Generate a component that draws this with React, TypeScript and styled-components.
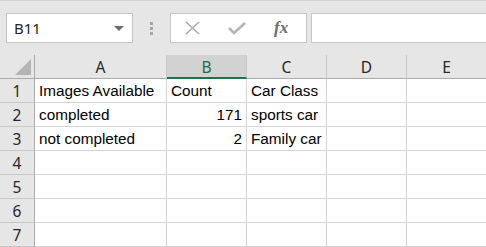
import { Fragment } from "react";
import styled, { createGlobalStyle } from "styled-components";

const GlobalStyle = createGlobalStyle`
  html, body {
    margin: 0;
    padding: 0;
    background: #ffffff;
  }
  body {
    font-family: "Noto Sans", "Open Sans", sans-serif;
    overflow: hidden;
  }
`;

const Sheet = styled.section`
  width: 486px;
  height: 247px;
  overflow: hidden;
  background: #ffffff;
`;

const Toolbar = styled.div`
  height: 55px;
  box-sizing: border-box;
  border-top: 1px solid #d2d2d2;
  background: #e6e6e6;
  display: flex;
  align-items: flex-start;
  padding: 12px 0 0 6px;
`;

const NameBox = styled.div`
  width: 127px;
  height: 30px;
  box-sizing: border-box;
  border: 1px solid #c6c6c6;
  background: #ffffff;
  display: flex;
  align-items: center;
  justify-content: space-between;
  padding: 0 8px 0 7px;
  font-size: 15px;
  color: #262626;
`;

const Caret = styled.span`
  width: 0;
  height: 0;
  border-left: 5px solid transparent;
  border-right: 5px solid transparent;
  border-top: 5px solid #6b6b6b;
  margin-top: 1px;
`;

const Grip = styled.div`
  width: 37px;
  height: 30px;
  display: flex;
  flex-direction: column;
  align-items: center;
  justify-content: center;
  gap: 2px;

  span {
    width: 3px;
    height: 3px;
    background: #a6a6a6;
  }
`;

const ButtonBox = styled.div`
  width: 137px;
  height: 30px;
  box-sizing: border-box;
  border: 1px solid #c6c6c6;
  background: #ffffff;
  display: flex;
  align-items: center;
  padding-left: 13px;
  gap: 27px;
`;

const Fx = styled.span`
  font-family: "Liberation Serif", "DejaVu Serif", serif;
  font-style: italic;
  font-weight: bold;
  font-size: 17px;
  color: #6b6b6b;
  margin-left: 1px;
`;

const FormulaInput = styled.div`
  flex: 1;
  height: 30px;
  box-sizing: border-box;
  margin-left: 4px;
  border: 1px solid #c6c6c6;
  border-right: none;
  background: #ffffff;
`;

const Grid = styled.div`
  display: grid;
  grid-template-columns: 35px 132px 80px 80px 80px 80px;
  grid-template-rows: repeat(8, 24px);
  background: #e6e6e6;
`;

const Corner = styled.div`
  box-sizing: border-box;
  border-right: 1px solid #ababab;
  border-bottom: 1px solid #ababab;
  position: relative;
  background: #e6e6e6;

  &::after {
    content: "";
    position: absolute;
    right: 3px;
    bottom: 3px;
    width: 0;
    height: 0;
    border-left: 16px solid transparent;
    border-bottom: 16px solid #b4b4b4;
  }
`;

const ColHead = styled.div<{ $active?: boolean }>`
  box-sizing: border-box;
  display: flex;
  align-items: center;
  justify-content: center;
  font-size: 15.5px;
  color: ${(p) => (p.$active ? "#1f6b45" : "#262626")};
  background: ${(p) => (p.$active ? "#d2d2d2" : "#e6e6e6")};
  border-right: 1px solid #c8c8c8;
  border-bottom: ${(p) => (p.$active ? "2px solid #217346" : "1px solid #ababab")};
  padding-top: ${(p) => (p.$active ? "1px" : "0")};
`;

const RowHead = styled.div`
  box-sizing: border-box;
  display: flex;
  align-items: center;
  justify-content: center;
  font-size: 15.5px;
  color: #262626;
  background: #e6e6e6;
  border-right: 1px solid #ababab;
  border-bottom: 1px solid #c8c8c8;
`;

const Cell = styled.div<{ $num?: boolean }>`
  box-sizing: border-box;
  background: #ffffff;
  border-right: 1px solid #d4d4d4;
  border-bottom: 1px solid #d4d4d4;
  display: flex;
  align-items: flex-end;
  justify-content: ${(p) => (p.$num ? "flex-end" : "flex-start")};
  padding: 0 4px 2px 4px;
  font-family: "Liberation Sans", Arial, sans-serif;
  font-size: 15.3px;
  line-height: 18px;
  color: #000000;
  white-space: nowrap;
`;

const cols = ["A", "B", "C", "D", "E"];

const rows: { v: string; num?: boolean }[][] = [
  [{ v: "Images Available" }, { v: "Count" }, { v: "Car Class" }, { v: "" }, { v: "" }],
  [{ v: "completed" }, { v: "171", num: true }, { v: "sports car" }, { v: "" }, { v: "" }],
  [{ v: "not completed" }, { v: "2", num: true }, { v: "Family car" }, { v: "" }, { v: "" }],
  [{ v: "" }, { v: "" }, { v: "" }, { v: "" }, { v: "" }],
  [{ v: "" }, { v: "" }, { v: "" }, { v: "" }, { v: "" }],
  [{ v: "" }, { v: "" }, { v: "" }, { v: "" }, { v: "" }],
  [{ v: "" }, { v: "" }, { v: "" }, { v: "" }, { v: "" }],
];

const App = () => {
  return (
    <Sheet>
      <GlobalStyle />
      <Toolbar>
        <NameBox>
          <span>B11</span>
          <Caret />
        </NameBox>
        <Grip>
          <span />
          <span />
          <span />
        </Grip>
        <ButtonBox>
          <svg width="17" height="14" viewBox="0 0 17 14">
            <path d="M2 1 L15 13 M15 1 L2 13" stroke="#ababab" strokeWidth="1.6" fill="none" />
          </svg>
          <svg width="18" height="14" viewBox="0 0 18 14">
            <path d="M1 7 L6 12 L17 2" stroke="#b4b4b4" strokeWidth="2.6" fill="none" />
          </svg>
          <Fx>fx</Fx>
        </ButtonBox>
        <FormulaInput />
      </Toolbar>

      <Grid>
        <Corner />
        {cols.map((c) => (
          <ColHead key={c} $active={c === "B"}>
            {c}
          </ColHead>
        ))}
        {rows.map((r, i) => (
          <Fragment key={i}>
            <RowHead>{i + 1}</RowHead>
            {r.map((cell, j) => (
              <Cell key={j} $num={cell.num}>
                {cell.v}
              </Cell>
            ))}
          </Fragment>
        ))}
      </Grid>
    </Sheet>
  );
};

export default App;
